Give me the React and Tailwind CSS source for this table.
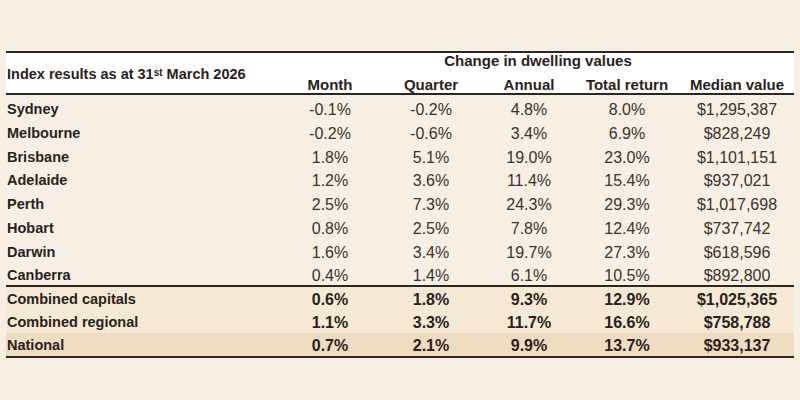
import React from 'react';

const cities = [
  ['Sydney', '-0.1%', '-0.2%', '4.8%', '8.0%', '$1,295,387'],
  ['Melbourne', '-0.2%', '-0.6%', '3.4%', '6.9%', '$828,249'],
  ['Brisbane', '1.8%', '5.1%', '19.0%', '23.0%', '$1,101,151'],
  ['Adelaide', '1.2%', '3.6%', '11.4%', '15.4%', '$937,021'],
  ['Perth', '2.5%', '7.3%', '24.3%', '29.3%', '$1,017,698'],
  ['Hobart', '0.8%', '2.5%', '7.8%', '12.4%', '$737,742'],
  ['Darwin', '1.6%', '3.4%', '19.7%', '27.3%', '$618,596'],
  ['Canberra', '0.4%', '1.4%', '6.1%', '10.5%', '$892,800'],
];

const totals = [
  ['Combined capitals', '0.6%', '1.8%', '9.3%', '12.9%', '$1,025,365', 'bg-[#f5e9d6]'],
  ['Combined regional', '1.1%', '3.3%', '11.7%', '16.6%', '$758,788', 'bg-[#f5e9d6]'],
  ['National', '0.7%', '2.1%', '9.9%', '13.7%', '$933,137', 'bg-[#eedcc0]'],
];

const cols = 'grid grid-cols-[276px_96px_106px_90px_106px_114px]';

const Row = ({ row, bold, bg = '', h = 'h-[23.75px] pt-[3px]' }) => (
  <div className={`${cols} ${h} ${bg} items-center`}>
    <div className="pl-[1px] text-[14.5px] font-bold text-[#2a221c]">{row[0]}</div>
    {row.slice(1, 6).map((v, i) => (
      <div
        key={i}
        className={`text-center text-[16px] ${bold ? 'font-bold text-[#2a221c]' : 'font-normal text-[#3b322b]'}`}
      >
        {v}
      </div>
    ))}
  </div>
);

export default function App() {
  return (
    <div
      className="w-[800px] h-[400px] bg-[#f7efe4] pt-[51px] pl-[6px]"
      style={{ fontFamily: '"Liberation Sans", Arial, sans-serif' }}
    >
      <div className="w-[788px]">
        {/* header */}
        <div className="bg-white border-t-2 border-b-2 border-[#2e2620] h-[44px] flex text-[#2a221c] font-bold">
          <div className="w-[276px] pl-[1px] flex items-center text-[14.5px] pt-[3px]">
            <span>
              Index results as at 31<sup className="text-[10px] relative -top-[3px]">st</sup> March 2026
            </span>
          </div>
          <div className="flex-1 flex flex-col">
            <div className="h-[20px] flex items-end justify-center text-[15px] leading-none pb-[1px]">
              Change in dwelling values
            </div>
            <div className="grid grid-cols-[96px_106px_90px_106px_114px] flex-1 items-center text-[15px] text-center pt-[5px]">
              <div>Month</div>
              <div>Quarter</div>
              <div>Annual</div>
              <div>Total return</div>
              <div>Median value</div>
            </div>
          </div>
        </div>

        {/* city rows */}
        <div className="border-b-2 border-[#2e2620]">
          {cities.map((r) => (
            <Row key={r[0]} row={r} />
          ))}
        </div>

        {/* aggregate rows */}
        <div className="border-b-2 border-[#2e2620]">
          {totals.map((r) => (
            <Row key={r[0]} row={r} bold bg={r[6]} h="h-[23px] pt-[1px]" />
          ))}
        </div>
      </div>
    </div>
  );
}
